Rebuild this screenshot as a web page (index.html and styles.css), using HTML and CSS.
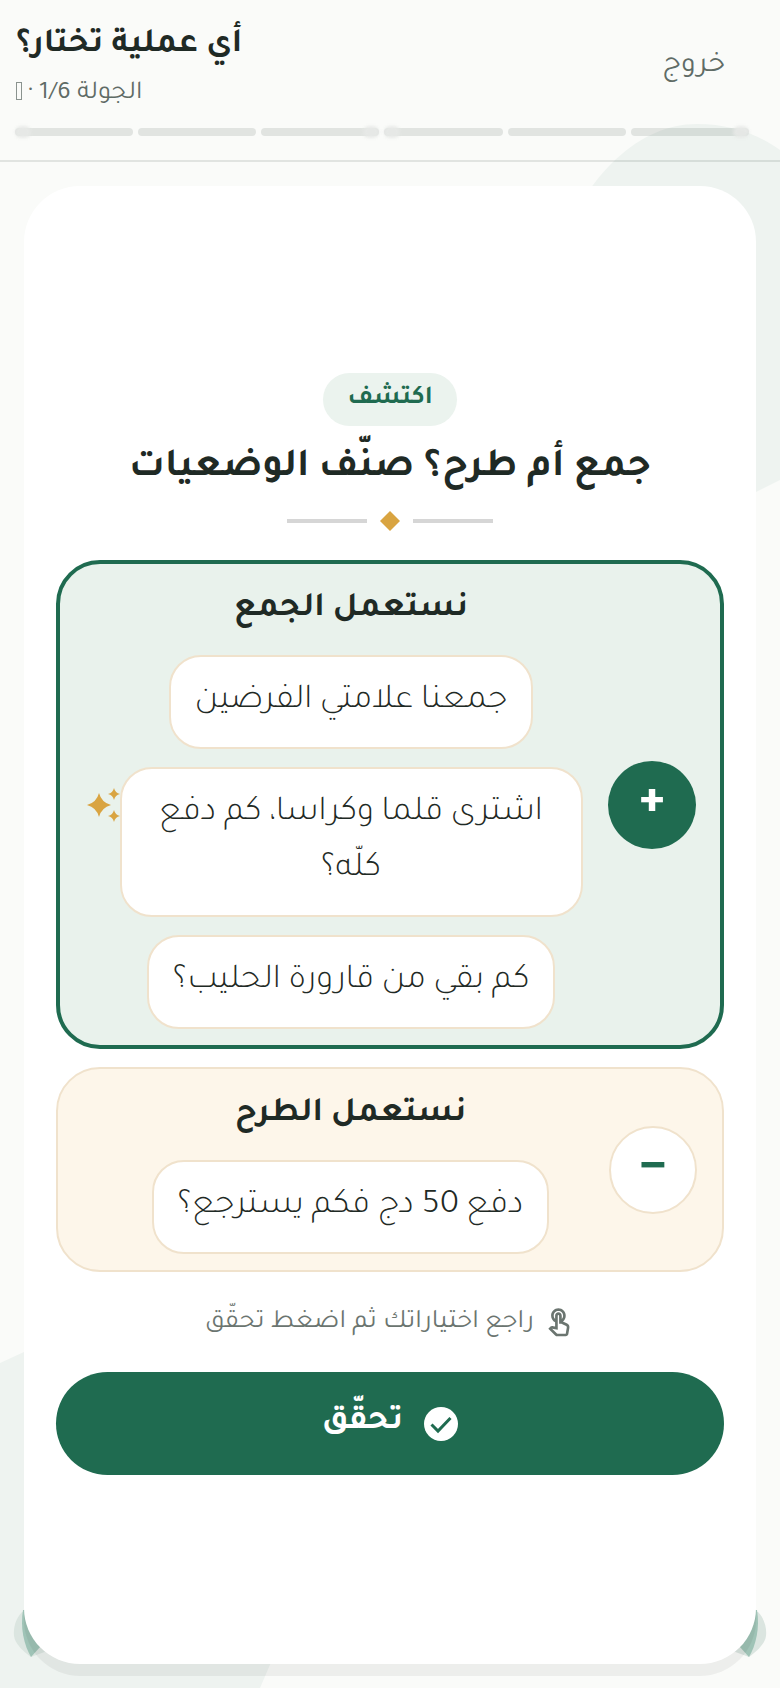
FILE: index.html
```html
<!DOCTYPE html>
<html lang="ar" dir="rtl">
  <head>
    <meta charset="UTF-8" />
    <meta name="viewport" content="width=device-width, initial-scale=1.0" />
    <title>أي عملية تختار؟</title>
    <link rel="stylesheet" href="styles.css">
  </head>

  <body>
    <svg class="bg-deco" viewBox="0 0 780 1688" aria-hidden="true">
      <path class="blob" d="M540 300C570 190 630 124 697 124C730 124 758 134 780 150V480L756 492H540Z" />
      <path class="blob" d="M0 1363L24 1352H300L272 1660L260 1688H0Z" />
      <path class="leaf" d="M22 1612C16 1618 13 1628 14 1636C15 1644 24 1652 31 1657L50 1650V1611Z" />
      <path class="leaf-dark" d="M23 1610C20 1628 24 1645 31 1657L41 1646L30 1610Z" />
      <path class="leaf" d="M758 1612C764 1618 767 1628 766 1636C765 1644 756 1652 749 1657L730 1650V1611Z" />
      <path class="leaf-dark" d="M757 1610C760 1628 756 1645 749 1657L739 1646L750 1610Z" />
    </svg>

    <header class="top-bar">
      <div class="top-row">
        <a class="exit-link" href="#">خروج</a>
        <div class="top-title">
          <h1>أي عملية تختار؟</h1>
          <p>الجولة 1/6 · <span class="missing-glyph"></span></p>
        </div>
      </div>
      <div class="progress">
        <span></span><span></span><span></span><span></span><span></span><span></span>
      </div>
    </header>

    <main class="page">
      <div class="sheet">
        <span class="tag">اكتشف</span>
        <h2 class="sheet-title">جمع أم طرح؟ صنّف الوضعيات</h2>
        <div class="divider"><i></i><b></b><i></i></div>

        <section class="box box-add">
          <button class="op-btn op-btn-on" type="button">+</button>
          <div class="box-col">
            <h3>نستعمل الجمع</h3>
            <div class="item">جمعنا علامتي الفرضين</div>
            <div class="item item-wide">
              اشترى قلما وكراسا، كم دفع كلّه؟
              <svg class="sparkle" viewBox="0 0 33 34" aria-hidden="true">
                <path d="M12 5Q14.500 14.500 24 17Q14.500 19.500 12 29Q9.500 19.500 0 17Q9.500 14.500 12 5Z" />
                <path d="M27 0Q28.200 4.800 33 6Q28.200 7.200 27 12Q25.800 7.200 21 6Q25.800 4.800 27 0Z" />
                <path d="M27 22Q28.200 26.800 33 28Q28.200 29.200 27 34Q25.800 29.200 21 28Q25.800 26.800 27 22Z" />
              </svg>
            </div>
            <div class="item">كم بقي من قارورة الحليب؟</div>
          </div>
        </section>

        <section class="box box-sub">
          <button class="op-btn" type="button">−</button>
          <div class="box-col">
            <h3>نستعمل الطرح</h3>
            <div class="item">دفع 50 دج فكم يسترجع؟</div>
          </div>
        </section>

        <p class="hint">
          <svg viewBox="0 0 24 24" aria-hidden="true">
            <path d="M18.190 12.440l-3.240-1.620c1.290-1 2.120-2.560 2.120-4.320 0-3.030-2.470-5.500-5.500-5.500s-5.500 2.470-5.500 5.500c0 2.130 1.220 3.980 3 4.890v3.260c-2.150-.46-2.020-.44-2.260-.44-.53 0-1.030.21-1.410.59L4 16.220l5.090 5.090C9.520 21.750 10.120 22 10.740 22h6.300c.98 0 1.810-.7 1.970-1.670l.8-4.710c.22-1.300-.43-2.580-1.620-3.180zm-.35 2.850l-.8 4.710h-6.300c-.09 0-.17-.04-.24-.1l-3.680-3.680 4.250.89V6.500c0-.28.22-.5.5-.5s.5.22.5.5v6h1.760l3.460 1.730c.4.2.62.63.55 1.060zM8.070 6.500c0-1.930 1.570-3.500 3.500-3.500s3.500 1.570 3.500 3.500c0 .95-.38 1.810-1 2.440V6.500c0-1.380-1.120-2.500-2.500-2.500s-2.500 1.120-2.500 2.500v2.440c-.62-.63-1-1.490-1-2.440z" />
          </svg>
          راجع اختياراتك ثم اضغط تحقّق
        </p>

        <button class="check-btn" type="button">
          <svg viewBox="0 0 34 34" aria-hidden="true">
            <circle cx="17" cy="17" r="17" />
            <path d="M7.500 17.500L14 24L26.500 11" />
          </svg>
          تحقّق
        </button>
      </div>
    </main>
  </body>
</html>
```
FILE: styles.css
```css
* {
  margin: 0;
  padding: 0;
  box-sizing: border-box;
}
html,
body {
  width: 780px;
  height: 1688px;
  overflow: hidden;
}
body {
  position: relative;
  background-color: #fafbf9;
  font-family: 'Tajawal', 'Noto Sans Arabic', 'Noto Sans', sans-serif;
  color: #1f2a25;
}
button {
  font-family: inherit;
  border: 0;
}
a {
  text-decoration: none;
}

.bg-deco {
  position: absolute;
  top: 0;
  left: 0;
  width: 780px;
  height: 1688px;
}
.blob {
  fill: #eef3f0;
}
.leaf {
  fill: #dbe5e0;
}
.leaf-dark {
  fill: #9fc3b6;
}

.top-bar {
  position: relative;
  height: 162px;
  padding: 14px 31px 0 15px;
  border-bottom: 2px solid rgba(30, 50, 40, 0.11);
}
.top-row {
  display: flex;
  justify-content: space-between;
  align-items: center;
  height: 98px;
  padding-left: 1px;
}
.exit-link {
  margin-top: 8px;
  margin-right: 24px;
  font-size: 30px;
  color: #5f6b66;
}
.top-title {
  display: flex;
  flex-direction: column;
  align-items: flex-end;
  padding-top: 6px;
}
.top-title h1 {
  font-size: 34px;
  font-weight: 700;
  line-height: 48px;
}
.top-title p {
  margin-top: 8px;
  font-size: 26px;
  line-height: 32px;
  color: #5f6b66;
}
.missing-glyph {
  display: inline-block;
  width: 6px;
  height: 18px;
  border: 1px solid #8a938f;
  vertical-align: -2px;
}
.progress {
  display: flex;
  gap: 5px;
  margin-top: 16px;
}
.progress span {
  position: relative;
  flex: 1;
  height: 8px;
  border-radius: 4px;
  background-color: rgba(30, 50, 40, 0.11);
}
.progress span:nth-child(1)::after,
.progress span:nth-child(3)::after,
.progress span:nth-child(4)::after,
.progress span:nth-child(6)::after {
  content: '';
  position: absolute;
  top: -2px;
  width: 16px;
  height: 12px;
  border-radius: 6px;
  background-color: #e7e9e7;
  opacity: 0.9;
  filter: blur(1.5px);
}
.progress span:nth-child(3)::after,
.progress span:nth-child(6)::after {
  left: 0;
}
.progress span:nth-child(1)::after,
.progress span:nth-child(4)::after {
  right: 0;
}

.page {
  position: relative;
  padding: 24px;
}
.sheet {
  display: flex;
  flex-direction: column;
  align-items: center;
  justify-content: center;
  height: 1478px;
  padding: 0 32px 2px;
  border-radius: 56px;
  background-color: #fff;
  box-shadow: 0 12px 0 rgba(0, 0, 0, 0.05);
}
.tag {
  padding: 0 24px;
  font-size: 26px;
  font-weight: 700;
  line-height: 53px;
  border-radius: 27px;
  color: #1f6b50;
  background-color: #ebf3ee;
}
.sheet-title {
  margin-top: 11px;
  font-size: 40px;
  font-weight: 700;
  line-height: 64px;
}
.divider {
  display: flex;
  align-items: center;
  gap: 13px;
  margin: 10px 0 29px;
}
.divider i {
  width: 80px;
  height: 4px;
  background-color: #d6d6d6;
}
.divider b {
  width: 20px;
  height: 20px;
  background-color: #d9a441;
  clip-path: polygon(50% 0, 100% 50%, 50% 100%, 0 50%);
}

.box {
  display: flex;
  align-items: center;
  gap: 16px;
  width: 668px;
  padding: 21px 24px 16px 50px;
  border-radius: 44px;
}
.box-add {
  border: 4px solid #1f6b50;
  background-color: #e9f2ec;
}
.box-sub {
  margin-top: 18px;
  padding-right: 25px;
  border: 2px solid #f0e2cc;
  background-color: #fdf6ea;
}
.box-col {
  flex: 1;
  display: flex;
  flex-direction: column;
  align-items: center;
  gap: 18px;
}
.box-col h3 {
  margin-bottom: 2px;
  font-size: 34px;
  font-weight: 700;
  line-height: 50px;
}
.item {
  position: relative;
  max-width: 463px;
  padding: 17px 24px;
  font-size: 35px;
  font-weight: 300;
  line-height: 56px;
  text-align: center;
  border: 2px solid #f0e2cc;
  border-radius: 32px;
  background-color: #fff;
}
.sparkle {
  position: absolute;
  left: -35px;
  top: 19px;
  width: 33px;
  height: 34px;
  fill: #d9a441;
}
.op-btn {
  flex: none;
  width: 88px;
  height: 88px;
  margin-top: -5px;
  font-size: 50px;
  font-weight: 800;
  line-height: 76px;
  padding-bottom: 2px;
  border-radius: 50%;
  color: #1f6b50;
  background-color: #fff;
  border: 2px solid #f0e2cc;
}
.op-btn-on {
  color: #fff;
  background-color: #1f6b50;
  border: 0;
}

.hint {
  display: flex;
  align-items: center;
  gap: 9px;
  margin-top: 31px;
  font-size: 26.600px;
  line-height: 40px;
  color: #6b7570;
}
.hint svg {
  width: 32px;
  height: 32px;
  fill: #6b7570;
}
.check-btn {
  display: flex;
  align-items: center;
  justify-content: center;
  gap: 21px;
  width: 668px;
  height: 103px;
  margin-top: 29px;
  font-size: 34px;
  font-weight: 700;
  border-radius: 52px;
  color: #fff;
  background-color: #1f6b50;
}
.check-btn svg {
  width: 34px;
  height: 34px;
}
.check-btn circle {
  fill: #fff;
}
.check-btn path {
  fill: none;
  stroke: #1f6b50;
  stroke-width: 3;
}
```
